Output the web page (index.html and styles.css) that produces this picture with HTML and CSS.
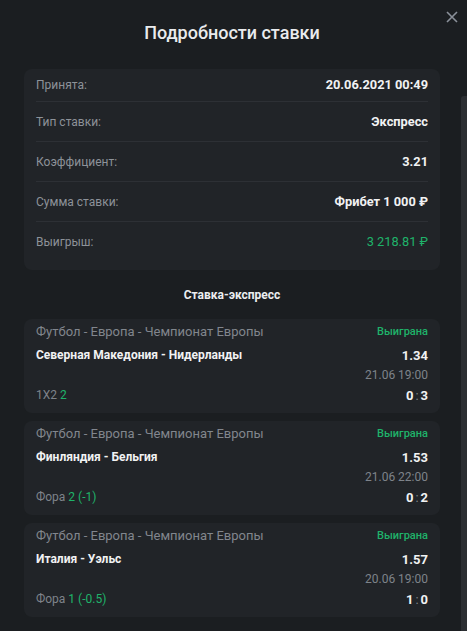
FILE: index.html
```html
<!DOCTYPE html>
<html lang="ru">
<head>
<meta charset="utf-8">
<link rel="stylesheet" href="styles.css">
</head>
<body>
<div class="modal">
  <button class="close" aria-label="Закрыть">
    <svg width="12" height="12" viewBox="0 0 12 12"><path d="M1 1L11 11M11 1L1 11" stroke="#8a9099" stroke-width="1.6" fill="none"/></svg>
  </button>
  <h1 class="title">Подробности ставки</h1>
  <div class="content">
    <div class="card details">
      <div class="row"><span class="label">Принята:</span><span class="value">20.06.2021 00:49</span></div>
      <div class="row"><span class="label">Тип ставки:</span><span class="value">Экспресс</span></div>
      <div class="row"><span class="label">Коэффициент:</span><span class="value">3.21</span></div>
      <div class="row"><span class="label">Сумма ставки:</span><span class="value">Фрибет 1 000 ₽</span></div>
      <div class="row"><span class="label">Выигрыш:</span><span class="value win">3 218.81 ₽</span></div>
    </div>
    <h2 class="subtitle">Ставка-экспресс</h2>
    <div class="bets">
      <div class="card bet">
        <div class="line"><span class="league">Футбол - Европа - Чемпионат Европы</span><span class="status">Выиграна</span></div>
        <div class="line teams"><span class="match">Северная Македония - Нидерланды</span><span class="odds">1.34</span></div>
        <div class="line"><span></span><span class="date">21.06 19:00</span></div>
        <div class="line"><span class="market">1X2 <em>2</em></span><span class="score">0<i>:</i>3</span></div>
      </div>
      <div class="card bet">
        <div class="line"><span class="league">Футбол - Европа - Чемпионат Европы</span><span class="status">Выиграна</span></div>
        <div class="line teams"><span class="match">Финляндия - Бельгия</span><span class="odds">1.53</span></div>
        <div class="line"><span></span><span class="date">21.06 22:00</span></div>
        <div class="line"><span class="market">Фора <em>2 (-1)</em></span><span class="score">0<i>:</i>2</span></div>
      </div>
      <div class="card bet">
        <div class="line"><span class="league">Футбол - Европа - Чемпионат Европы</span><span class="status">Выиграна</span></div>
        <div class="line teams"><span class="match">Италия - Уэльс</span><span class="odds">1.57</span></div>
        <div class="line"><span></span><span class="date">20.06 19:00</span></div>
        <div class="line"><span class="market">Фора <em>1 (-0.5)</em></span><span class="score">1<i>:</i>0</span></div>
      </div>
    </div>
  </div>
  <div class="scrollbar"></div>
</div>
</body>
</html>
```

FILE: styles.css
```css
* { box-sizing: border-box; }
html, body { margin: 0; padding: 0; }
body {
  background: #1b1e21;
  font-family: Roboto, "Noto Sans", "Liberation Sans", sans-serif;
  color: #eceef0;
  width: 467px;
  height: 631px;
  overflow: hidden;
}
.modal {
  position: relative;
  height: 631px;
  padding-top: 21px;
}
.close {
  position: absolute;
  top: 11px;
  left: 446px;
  width: 12px;
  height: 12px;
  padding: 0;
  border: 0;
  background: none;
  display: block;
}
.close svg { display: block; }
.title {
  margin: 0;
  font-size: 18px;
  font-weight: 500;
  line-height: 24px;
  text-align: center;
  color: #e9ebed;
  padding-right: 3px;
}
.content {
  width: 416px;
  margin: 24px 0 0 24px;
}
.card {
  background: #212428;
  border-radius: 8px;
}
.details {
  padding: 0 12px 8px;
}
.row {
  display: flex;
  justify-content: space-between;
  align-items: center;
  height: 40px;
  line-height: 14px;
  font-size: 12px;
  border-bottom: 1px solid #2d3035;
}
.row:first-child { height: 33px; }
.row:last-child { border-bottom: 0; }
.label { color: #8d9299; }
.value { font-size: 12.8px; font-weight: 700; color: #f1f2f3; }
.value.win { font-weight: 400; color: #1fb36a; }
.subtitle {
  margin: 15px 0 14px;
  font-size: 12px;
  font-weight: 700;
  line-height: 20px;
  text-align: center;
  color: #eceef0;
}
.bets {
  display: flex;
  flex-direction: column;
  gap: 8px;
}
.bet {
  padding: 2px 12px 8px;
}
.line {
  display: flex;
  justify-content: space-between;
  align-items: center;
  height: 20px;
}
.line.teams { margin-top: 4px; }
.league { font-size: 13px; color: #81868d; }
.status { font-size: 11px; font-weight: 500; color: #1fb36a; }
.match { font-size: 12px; font-weight: 700; color: #f1f2f3; }
.odds { font-size: 13px; font-weight: 700; color: #f1f2f3; }
.date { font-size: 12px; color: #7e838a; }
.market { font-size: 12px; color: #7e838a; }
.market em { font-style: normal; color: #1fb36a; }
.score { font-size: 13px; font-weight: 700; color: #f1f2f3; }
.score i { font-style: normal; font-weight: 400; color: #7e838a; padding: 0 2px; }
.scrollbar {
  position: absolute;
  left: 461px;
  top: 96px;
  width: 8px;
  height: 560px;
  background: #2b2e32;
  border-radius: 3px;
}
```
